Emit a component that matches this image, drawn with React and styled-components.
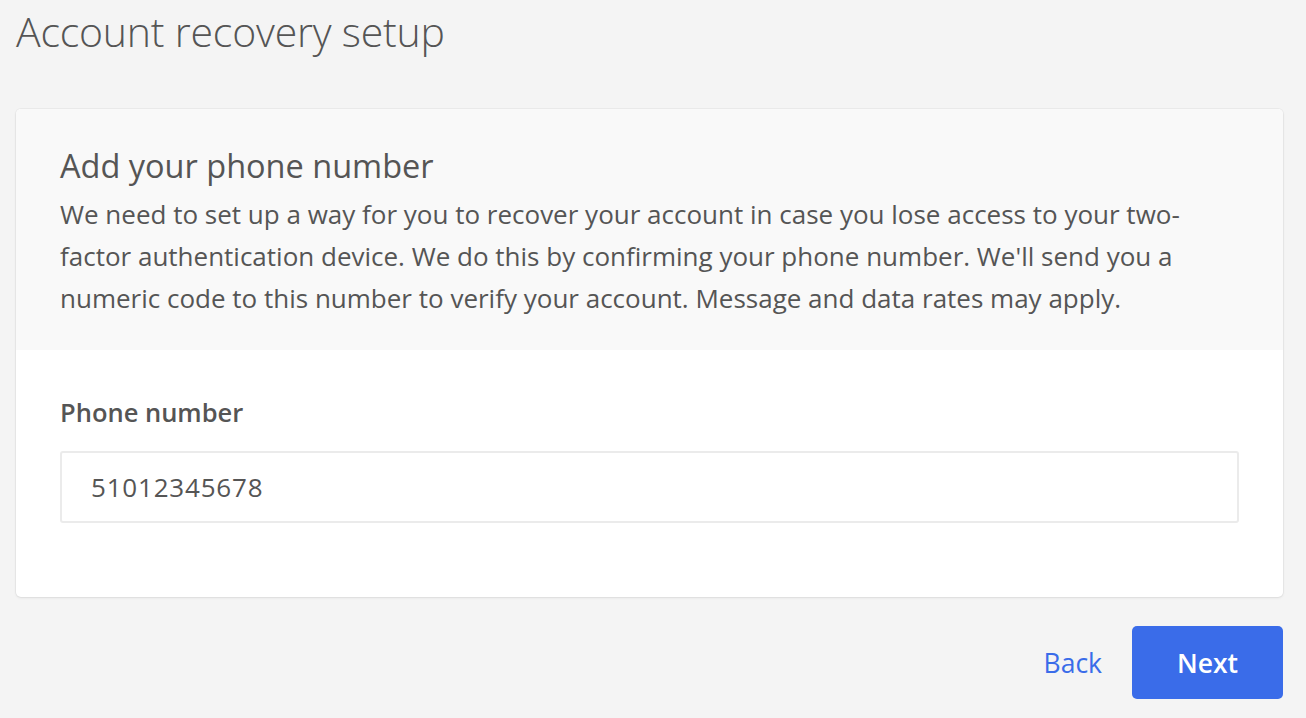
import React from "react";
import styled, { createGlobalStyle } from "styled-components";

const GlobalStyle = createGlobalStyle`
  html, body {
    margin: 0;
    background: #f4f4f4;
  }
  body {
    font-family: "Open Sans", "Noto Sans", sans-serif;
    color: #555;
  }
`;

export default function App() {
  return (
    <>
      <GlobalStyle />
      <Page>
        <Title>Account recovery setup</Title>

        <Card>
          <CardHeader>
            <Heading>Add your phone number</Heading>
            <Intro>
              We need to set up a way for you to recover your account in case
              you lose access to your two-factor authentication device. We do
              this by confirming your phone number. We'll send you a numeric
              code to this number to verify your account. Message and data
              rates may apply.
            </Intro>
          </CardHeader>

          <CardBody>
            <Label htmlFor="phone">Phone number</Label>
            <Input id="phone" type="tel" defaultValue="51012345678" />
          </CardBody>
        </Card>

        <Actions>
          <LinkButton>Back</LinkButton>
          <PrimaryButton>Next</PrimaryButton>
        </Actions>
      </Page>
    </>
  );
}

const Page = styled.main`
  padding: 8px 23px 0 16px;
  min-height: 718px;
  box-sizing: border-box;
`;

const Title = styled.h1`
  margin: 0 0 55px 0;
  font-size: 41px;
  font-weight: 300;
  line-height: 46px;
  color: #555;
  letter-spacing: -0.2px;
`;

const Card = styled.section`
  background: #fff;
  border-radius: 5px;
  overflow: hidden;
  box-shadow: 0 0 0 1px rgba(0, 0, 0, 0.035), 0 1px 3px rgba(0, 0, 0, 0.07);
`;

const CardHeader = styled.header`
  background: #f9f9f9;
  padding: 37px 44px 31px 44px;
`;

const Heading = styled.h2`
  margin: 0;
  font-size: 32.5px;
  font-weight: 400;
  line-height: 40px;
  color: #555;
`;

const Intro = styled.p`
  margin: 7px 0 0 0;
  font-size: 26px;
  line-height: 42px;
  color: #555;
`;

const CardBody = styled.div`
  display: flex;
  flex-direction: column;
  padding: 46px 44px 74px 44px;
`;

const Label = styled.label`
  font-size: 25.5px;
  font-weight: 600;
  line-height: 32px;
  color: #555;
  margin-bottom: 23px;
`;

const Input = styled.input`
  box-sizing: border-box;
  height: 72px;
  padding: 0 29px;
  border: 2px solid #ebebeb;
  border-radius: 3px;
  background: #fff;
  font-family: "Open Sans", "Noto Sans", sans-serif;
  font-size: 26px;
  color: #555;
  letter-spacing: 0.8px;
  outline: none;
`;

const Actions = styled.div`
  display: flex;
  justify-content: flex-end;
  align-items: center;
  gap: 30px;
  margin-top: 29px;
`;

const LinkButton = styled.button`
  background: none;
  border: none;
  padding: 0;
  font-family: "Open Sans", "Noto Sans", sans-serif;
  font-size: 26.5px;
  color: #3a6ce9;
  cursor: pointer;
`;

const PrimaryButton = styled.button`
  width: 151px;
  height: 73px;
  border: none;
  border-radius: 5px;
  background: #3a6ce9;
  color: #fff;
  font-family: "Open Sans", "Noto Sans", sans-serif;
  font-size: 26.5px;
  font-weight: 600;
  cursor: pointer;
`;
